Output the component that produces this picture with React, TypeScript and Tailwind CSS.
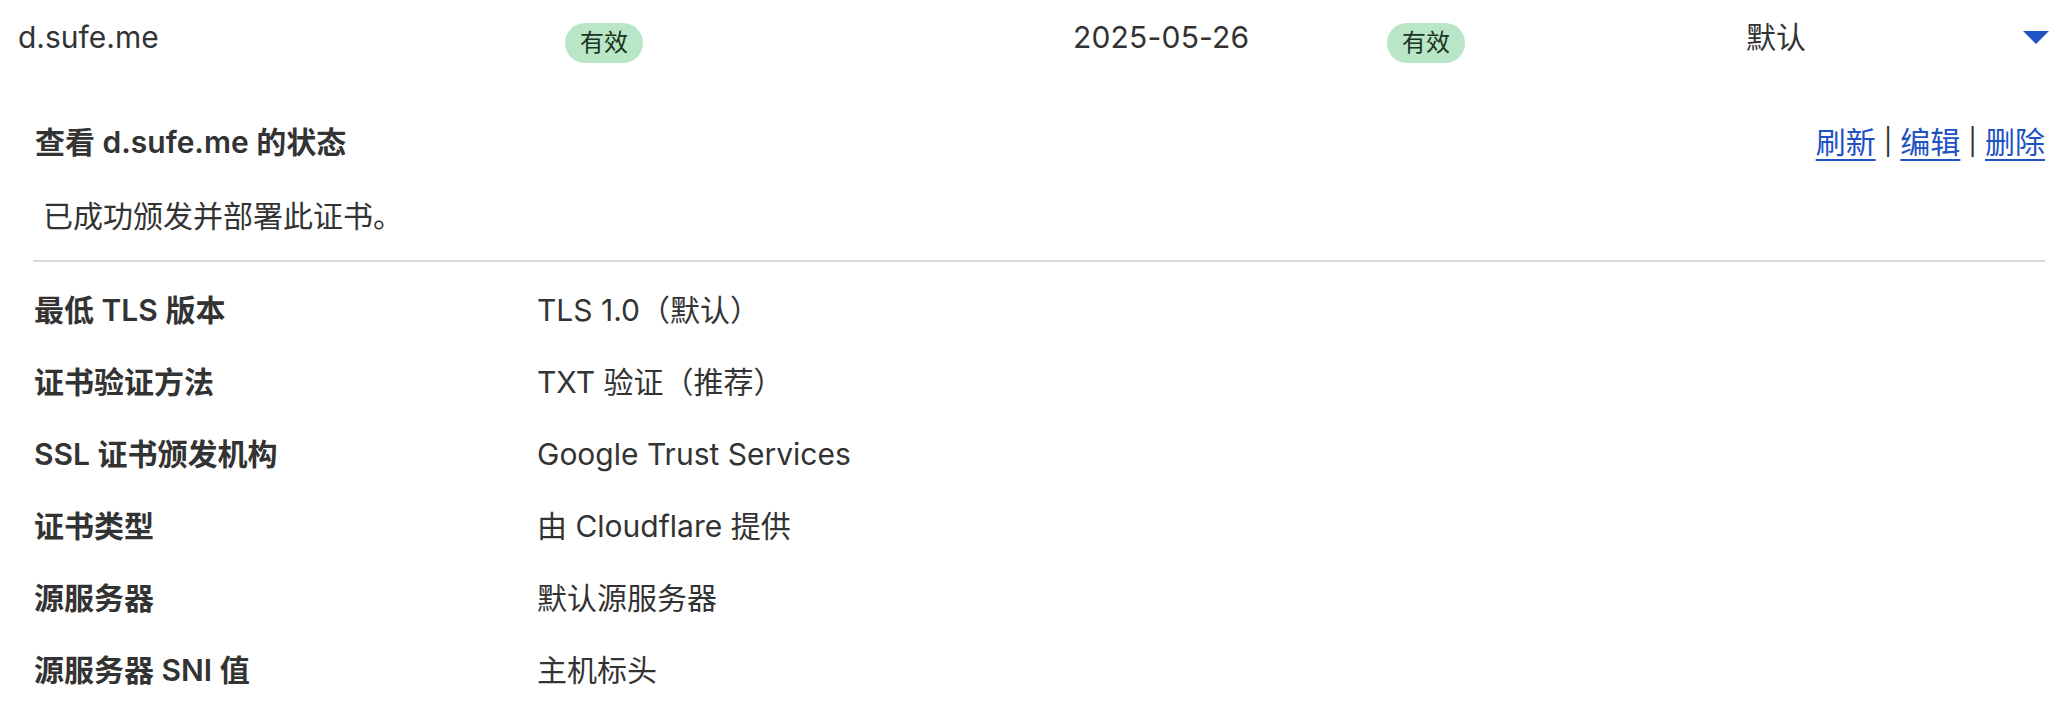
const rows: { label: string; value: string }[] = [
  { label: "最低 TLS 版本", value: "TLS 1.0（默认）" },
  { label: "证书验证方法", value: "TXT 验证（推荐）" },
  { label: "SSL 证书颁发机构", value: "Google Trust Services" },
  { label: "证书类型", value: "由 Cloudflare 提供" },
  { label: "源服务器", value: "默认源服务器" },
  { label: "源服务器 SNI 值", value: "主机标头" },
];

const Badge = ({ children }: { children: React.ReactNode }) => (
  <span className="inline-flex items-center h-[40px] px-[15px] rounded-full bg-[#b8e6c6] text-[#1c3324] text-[24px] leading-none">
    {children}
  </span>
);

const App = () => {
  return (
    <div className="w-[2058px] h-[726px] bg-white text-[#333333] font-['Inter','Noto_Sans_CJK_SC',sans-serif] overflow-hidden">
      {/* summary row */}
      <div className="flex items-center h-[80px] pl-[18px] pr-[9px] text-[30px]">
        <div className="w-[547px] mb-[5px]">d.sufe.me</div>
        <div className="w-[508px]">
          <Badge>有效</Badge>
        </div>
        <div className="w-[314px] mb-[5px] tracking-[0.2px]">2025-05-26</div>
        <div className="w-[359px]">
          <Badge>有效</Badge>
        </div>
        <div className="flex-1 mb-[5px]">默认</div>
        <svg width="26" height="13" viewBox="0 0 26 13" className="mb-[6px]">
          <path d="M0 0h26L13 13z" fill="#2152c4" />
        </svg>
      </div>

      {/* details */}
      <div className="ml-[33px] mr-[13px]">
        <div className="flex items-center justify-between pt-[44px] pl-[2px] text-[30px] leading-[36px]">
          <strong className="font-semibold">查看 d.sufe.me 的状态</strong>
          <div className="flex items-center gap-[8px] text-[#333333]">
            <a href="#" className="text-[#2152c4] underline decoration-2 underline-offset-[6px]">
              刷新
            </a>
            <span className="text-[26px]">|</span>
            <a href="#" className="text-[#2152c4] underline decoration-2 underline-offset-[6px]">
              编辑
            </a>
            <span className="text-[26px]">|</span>
            <a href="#" className="text-[#2152c4] underline decoration-2 underline-offset-[6px]">
              删除
            </a>
          </div>
        </div>
        <p className="mt-[38px] pl-[10px] text-[30px] leading-[36px]">已成功颁发并部署此证书。</p>
        <div className="mt-[26px] border-t-2 border-[#d9d9d9]" />

        <div className="pt-[12px]">
          {rows.map((r) => (
            <div key={r.label} className="flex items-center h-[72px] pl-[1px] text-[30px]">
              <div className="w-[503px] font-semibold">{r.label}</div>
              <div>{r.value}</div>
            </div>
          ))}
        </div>
      </div>
    </div>
  );
};

export default App;
